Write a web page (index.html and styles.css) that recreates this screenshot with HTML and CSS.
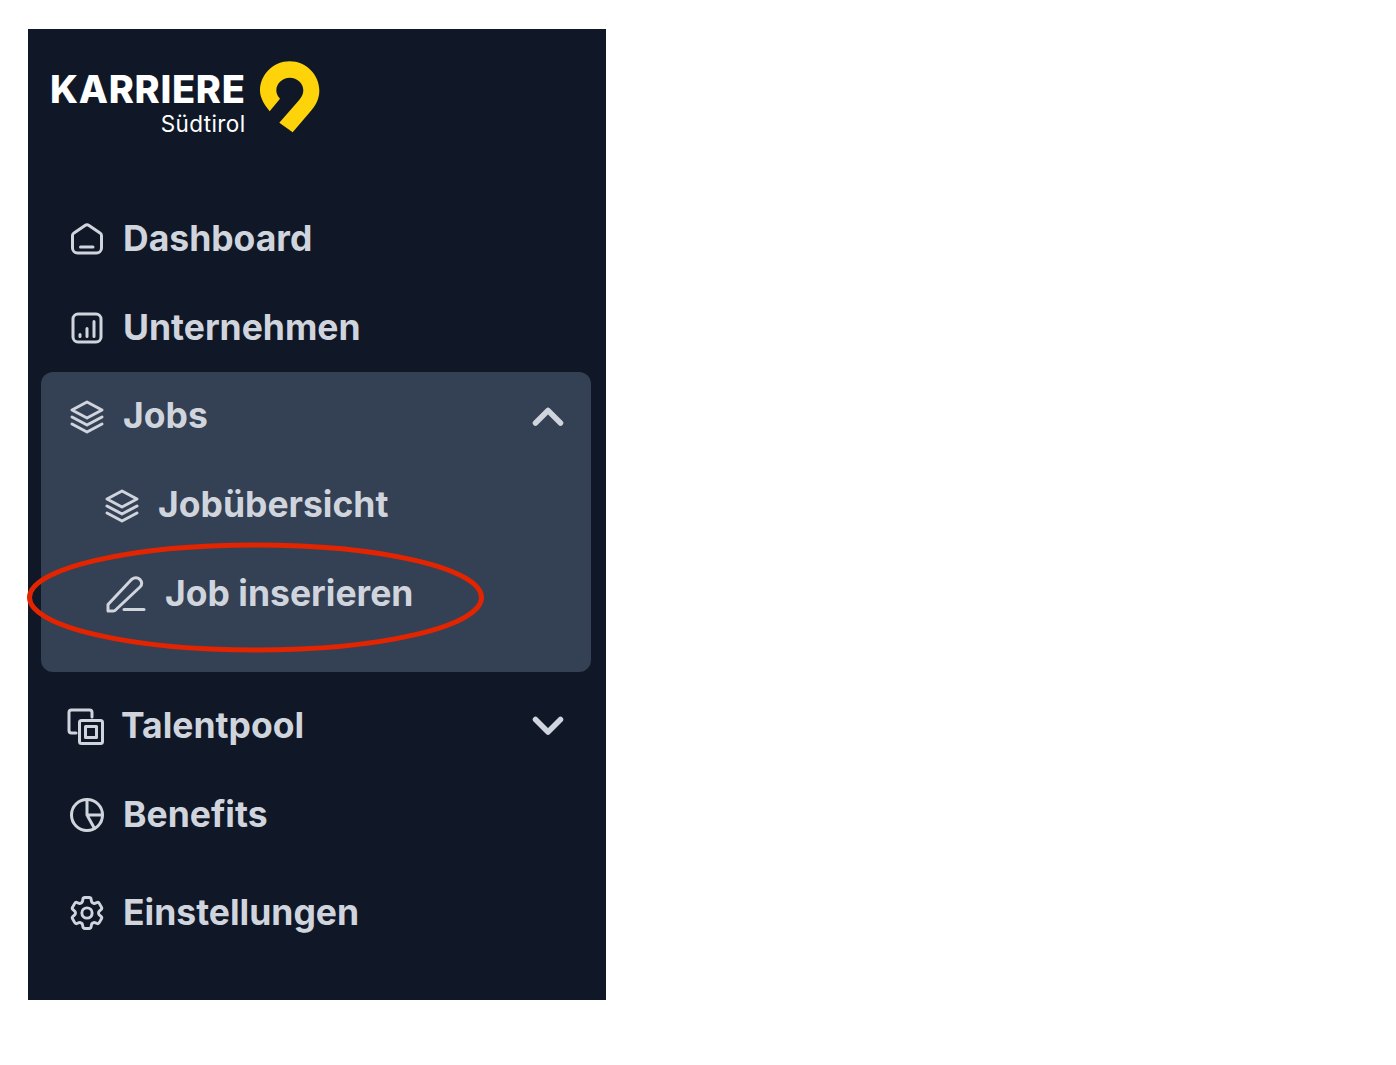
FILE: index.html
```html
<!DOCTYPE html>
<html lang="de">
<head>
<meta charset="utf-8">
<title>Karriere Südtirol</title>
<link rel="stylesheet" href="styles.css">
</head>
<body>
<aside class="sidebar">
  <div class="logo">
    <div class="logo-text">
      <span class="logo-main">KARRIERE</span>
      <span class="logo-sub">Südtirol</span>
    </div>
    <svg class="logo-pin" viewBox="692 100 180 215" aria-hidden="true"><path d="M721 250C700 225 692 205 692 188C692 140 732 100 781 100C830 100 870 140 870 188C870 215 858 235 840 255L790 313L750 285L805 222C815 210 822 200 822 188C822 167 804 150 781 150C760 150 741 167 741 188C741 197 745 205 752 213Z"/></svg>
  </div>
  <nav class="nav">
    <a class="row">
      <svg class="icon" viewBox="0 0 36 36"><path d="M16 4.500a3.500 3.500 0 0 1 4 0L31 12a3 3 0 0 1 1.500 2.500V27a5 5 0 0 1-5 5H8.500a5 5 0 0 1-5-5V14.500A3 3 0 0 1 5 12Z"/><path d="M11.500 26H24"/></svg>
      <span>Dashboard</span>
    </a>
    <a class="row">
      <svg class="icon" viewBox="0 0 36 36"><rect x="4" y="4" width="28" height="28" rx="5"/><path d="M11 24.500V26.500M18 18.500V26.500M25 11.500V26.500"/></svg>
      <span>Unternehmen</span>
    </a>
    <div class="group">
      <a class="row">
        <svg class="icon" viewBox="0 0 36 36"><path d="M18 3L33 11L18 19L3 11Z"/><path d="M3 18L18 26L33 18"/><path d="M3 25L18 33L33 25"/></svg>
        <span>Jobs</span>
        <svg class="chevron" viewBox="0 0 36 36"><path d="M5.500 24L18 11.500L30.500 24"/></svg>
      </a>
      <a class="row sub">
        <svg class="icon" viewBox="0 0 36 36"><path d="M18 3L33 11L18 19L3 11Z"/><path d="M3 18L18 26L33 18"/><path d="M3 25L18 33L33 25"/></svg>
        <span>Jobübersicht</span>
      </a>
      <a class="row sub">
        <svg class="icon icon-wide" viewBox="0 0 40 40"><path d="M3 36V29.500L26.500 4.500Q31 1 35 4.500Q38.500 8.500 35 12L10 35.500Q9 36 8 36Z"/><path d="M19 34.500H39"/></svg>
        <span>Job inserieren</span>
      </a>
    </div>
    <a class="row talent">
      <svg class="icon" viewBox="0 0 36 36"><path d="M25 9V4.500Q25 2 22.500 2H4.500Q2 2 2 4.500V22.500Q2 25 4.500 25H9"/><rect x="12.500" y="12.500" width="23" height="23" rx="2"/><rect x="18.500" y="18.500" width="11" height="11"/></svg>
      <span>Talentpool</span>
      <svg class="chevron" viewBox="0 0 36 36"><path d="M5.500 11.500L18 24L30.500 11.500"/></svg>
    </a>
    <a class="row">
      <svg class="icon" viewBox="0 0 36 36"><circle cx="18" cy="18" r="15.500"/><path d="M18 2.500V18H33.500M18 18L25.500 31.500"/></svg>
      <span>Benefits</span>
    </a>
    <a class="row settings">
      <svg class="icon" viewBox="1.500 1.500 21 21"><path class="thin" d="M9.594 3.940c.090-.542.560-.940 1.110-.940h2.593c.550 0 1.020.398 1.110.940l.213 1.281c.063.374.313.686.645.870.074.040.147.083.220.127.325.196.720.257 1.075.124l1.217-.456a1.125 1.125 0 011.370.490l1.296 2.247a1.125 1.125 0 01-.260 1.431l-1.003.827c-.293.240-.438.613-.431.992a6.759 6.759 0 010 .255c-.007.378.138.750.430.990l1.005.828c.424.350.534.954.260 1.430l-1.298 2.247a1.125 1.125 0 01-1.369.491l-1.217-.456c-.355-.133-.750-.072-1.076.124a6.570 6.570 0 01-.220.128c-.331.183-.581.495-.644.869l-.213 1.280c-.090.543-.560.941-1.110.941h-2.594c-.550 0-1.020-.398-1.110-.940l-.213-1.281c-.062-.374-.312-.686-.644-.870a6.520 6.520 0 01-.220-.127c-.325-.196-.720-.257-1.076-.124l-1.217.456a1.125 1.125 0 01-1.369-.490l-1.297-2.247a1.125 1.125 0 01.260-1.431l1.004-.827c.292-.240.437-.613.430-.992a6.932 6.932 0 010-.255c.007-.378-.138-.750-.430-.990l-1.004-.828a1.125 1.125 0 01-.260-1.430l1.297-2.247a1.125 1.125 0 011.370-.491l1.216.456c.356.133.751.072 1.076-.124.072-.044.146-.087.220-.128.332-.183.582-.495.644-.869l.214-1.281z"/><path class="thin" d="M15 12a3 3 0 11-6 0 3 3 0 016 0z"/></svg>
      <span>Einstellungen</span>
    </a>
  </nav>
  <svg class="annotation" viewBox="0 0 460 112" aria-hidden="true"><ellipse cx="227.500" cy="54.500" rx="226" ry="52.500"/></svg>
</aside>
</body>
</html>
```
FILE: styles.css
```css
* { box-sizing: border-box; }

html, body { margin: 0; background: #fff; }

body { padding: 29px 0 0 28px; }

.sidebar {
  position: relative;
  width: 578px;
  height: 971px;
  background: #101828;
  font-family: Inter, "Liberation Sans", sans-serif;
}

.logo {
  display: flex;
  align-items: flex-start;
  gap: 14px;
  height: 165px;
  padding: 32px 0 0 22px;
}

.logo-text {
  display: flex;
  flex-direction: column;
  align-items: flex-end;
  padding-top: 5px;
  color: #fff;
}

.logo-main {
  font-size: 38px;
  font-weight: 800;
  line-height: 46px;
  letter-spacing: 0.700px;
}

.logo-sub {
  font-size: 22.500px;
  line-height: 24px;
  font-weight: 400;
  letter-spacing: 0.400px;
}

.logo-pin {
  width: 60px;
  height: 72px;
  fill: #ffd30a;
}

.nav {
  display: flex;
  flex-direction: column;
  padding: 0 15px 0 13px;
}

.row {
  display: flex;
  align-items: center;
  gap: 18px;
  height: 89px;
  padding: 0 25px 0 28px;
  color: #d0d5dd;
  font-size: 35.500px;
  font-weight: 700;
}

.group .row span { position: relative; top: -1px; }

.icon, .chevron {
  flex: none;
  width: 36px;
  height: 36px;
  fill: none;
  stroke: #d0d5dd;
  overflow: visible;
  stroke-linecap: round;
  stroke-linejoin: round;
}

.icon { stroke-width: 3; }

.icon .thin { stroke-width: 1.700; }

.chevron {
  margin-left: auto;
  stroke-width: 5.500;
}

.group {
  height: 300px;
  border-radius: 12px;
  background: #344054;
}

.sub { padding-left: 63px; }

.icon-wide {
  width: 40px;
  height: 40px;
  margin-left: 1px;
  margin-right: 2px;
}

.talent {
  margin-top: 9px;
  padding-left: 26px;
}

.settings { margin-top: 9px; }

.annotation {
  position: absolute;
  left: 0;
  top: 514px;
  width: 460px;
  height: 112px;
  fill: none;
  stroke: #e32400;
  stroke-width: 5;
  overflow: visible;
}
```
